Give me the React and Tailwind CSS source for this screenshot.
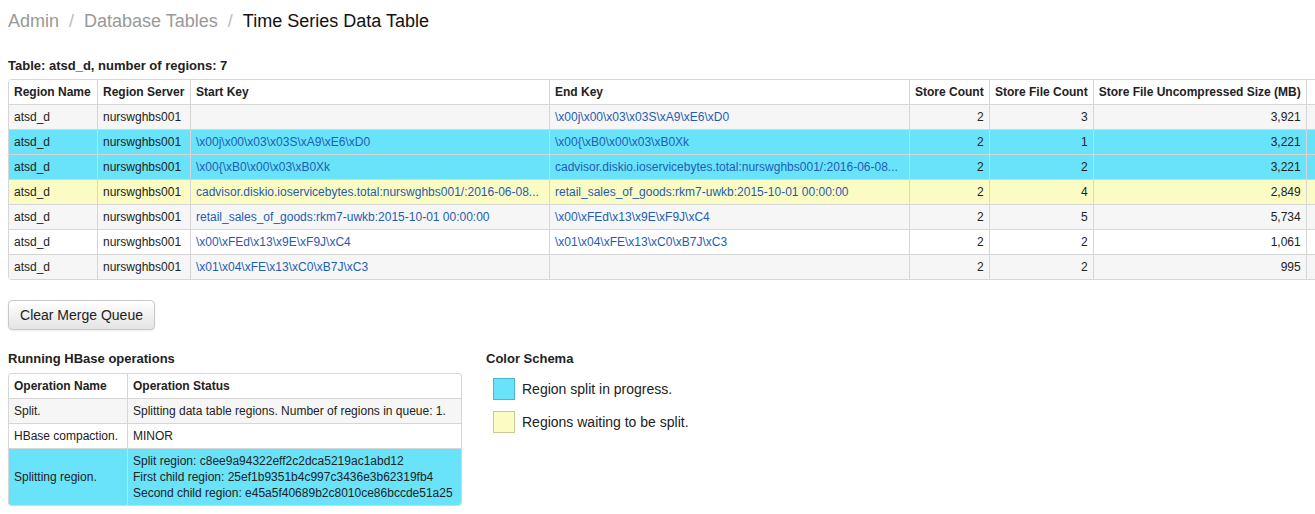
const columns = [
  ["Region Name", "w-[89px]", "left"],
  ["Region Server", "w-[93px]", "left"],
  ["Start Key", "w-[359px]", "left"],
  ["End Key", "w-[360px]", "left"],
  ["Store Count", "w-[79px]", "right"],
  ["Store File Count", "w-[104px]", "right"],
  ["Store File Uncompressed Size (MB)", "w-[211px]", "right"],
  ["Store File Size (MB)", "w-[140px]", "right"]
];

const regions = [
  ["", "\\x00j\\x00\\x03\\x03S\\xA9\\xE6\\xD0", 2, 3, "3,921", ""],
  ["\\x00j\\x00\\x03\\x03S\\xA9\\xE6\\xD0", "\\x00{\\xB0\\x00\\x03\\xB0Xk", 2, 1, "3,221", "split"],
  ["\\x00{\\xB0\\x00\\x03\\xB0Xk", "cadvisor.diskio.ioservicebytes.total:nurswghbs001/:2016-06-08...", 2, 2, "3,221", "split"],
  ["cadvisor.diskio.ioservicebytes.total:nurswghbs001/:2016-06-08...", "retail_sales_of_goods:rkm7-uwkb:2015-10-01 00:00:00", 2, 4, "2,849", "wait"],
  ["retail_sales_of_goods:rkm7-uwkb:2015-10-01 00:00:00", "\\x00\\xFEd\\x13\\x9E\\xF9J\\xC4", 2, 5, "5,734", ""],
  ["\\x00\\xFEd\\x13\\x9E\\xF9J\\xC4", "\\x01\\x04\\xFE\\x13\\xC0\\xB7J\\xC3", 2, 2, "1,061", ""],
  ["\\x01\\x04\\xFE\\x13\\xC0\\xB7J\\xC3", "", 2, 2, "995", ""]
];

function rowTone(state, index) {
  if (state === "split") return "bg-[#69e3fa]";
  if (state === "wait") return "bg-[#fafcc3]";
  return index % 2 === 0 ? "bg-[#f6f6f6]" : "bg-white";
}

const td = "border-l border-t border-[#d6d6d6] px-[5px] py-[4px] leading-4 whitespace-nowrap overflow-hidden";

function RegionTable() {
  return (
    <div className="w-[1451px] overflow-hidden rounded-[4px] border border-l-0 border-[#d6d6d6]">
      <table className="table-fixed border-separate border-spacing-0 text-[12px] text-[#222]">
        <colgroup>
          {columns.map(([title, width]) => <col key={title} className={width} />)}
        </colgroup>
        <thead>
          <tr className="bg-white">
            {columns.map(([title, , align]) => (
              <th key={title} className={`border-l border-[#d6d6d6] px-[5px] py-[4px] leading-4 font-bold whitespace-nowrap ${align === "right" ? "text-right" : "text-left"}`}>{title}</th>
            ))}
          </tr>
        </thead>
        <tbody>
          {regions.map(([start, end, stores, files, size, state], i) => (
            <tr key={i} className={rowTone(state, i)}>
              <td className={td}>atsd_d</td>
              <td className={td}>nurswghbs001</td>
              <td className={`${td} text-[#1f5db5]`}>{start}</td>
              <td className={`${td} text-[#1f5db5]`}>{end}</td>
              <td className={`${td} text-right`}>{stores}</td>
              <td className={`${td} text-right`}>{files}</td>
              <td className={`${td} text-right`}>{size}</td>
              <td className={td}></td>
            </tr>
          ))}
        </tbody>
      </table>
    </div>
  );
}

const operations = [
  ["Split.", ["Splitting data table regions. Number of regions in queue: 1."], "bg-[#f6f6f6]"],
  ["HBase compaction.", ["MINOR"], "bg-white"],
  ["Splitting region.", [
    "Split region: c8ee9a94322eff2c2dca5219ac1abd12",
    "First child region: 25ef1b9351b4c997c3436e3b62319fb4",
    "Second child region: e45a5f40689b2c8010ce86bccde51a25"
  ], "bg-[#69e3fa]"]
];

function OperationsTable() {
  return (
    <div className="w-[454px] overflow-hidden rounded-[4px] border border-l-0 border-[#d6d6d6]">
      <table className="w-full table-fixed border-separate border-spacing-0 text-[12px] text-[#222]">
        <colgroup>
          <col className="w-[119px]" />
          <col />
        </colgroup>
        <thead>
          <tr>
            <th className="border-l border-[#d6d6d6] px-[5px] py-[4px] text-left leading-4 font-bold">Operation Name</th>
            <th className="border-l border-[#d6d6d6] px-[5px] py-[4px] text-left leading-4 font-bold">Operation Status</th>
          </tr>
        </thead>
        <tbody>
          {operations.map(([name, lines, tone]) => (
            <tr key={name} className={tone}>
              <td className={td}>{name}</td>
              <td className={td}>{lines.map((line) => <div key={line}>{line}</div>)}</td>
            </tr>
          ))}
        </tbody>
      </table>
    </div>
  );
}

export default function App() {
  return (
    <div className="h-[514px] w-[1315px] overflow-hidden bg-white font-['Liberation_Sans',Arial,sans-serif] text-[#222]">
      <div className="px-2 pt-[11px]">
        <div className="flex items-center gap-[10px] text-[18px] leading-5">
          <span className="text-[#999]">Admin</span>
          <span className="text-[#bbb]">/</span>
          <span className="text-[#999]">Database Tables</span>
          <span className="text-[#bbb]">/</span>
          <span className="text-[#111]">Time Series Data Table</span>
        </div>

        <h3 className="mt-[27px] mb-[5px] text-[13px] font-bold leading-4">Table: atsd_d, number of regions: 7</h3>
        <RegionTable />

        <button className="mt-[20px] h-[30px] w-[147px] rounded-[4px] border border-[#c8c8c8] bg-gradient-to-b from-white to-[#e4e4e4] text-[14px] text-[#222] shadow-[0_1px_2px_rgba(0,0,0,0.08)]">Clear Merge Queue</button>

        <div className="mt-[21px] flex gap-[24px]">
          <div>
            <h3 className="mb-[6px] text-[13px] font-bold leading-4">Running HBase operations</h3>
            <OperationsTable />
          </div>
          <div>
            <h3 className="mb-[4px] text-[13px] font-bold leading-4">Color Schema</h3>
            <div className="flex flex-col gap-[11px] pl-[7px] pt-[7px]">
              <div className="flex items-center gap-[7px] text-[14px]">
                <span className="h-[22px] w-[22px] border border-[#4bb5cb] bg-[#69e3fa]" />
                <span>Region split in progress.</span>
              </div>
              <div className="flex items-center gap-[7px] text-[14px]">
                <span className="h-[22px] w-[22px] border border-[#c9c996] bg-[#fafcc3]" />
                <span>Regions waiting to be split.</span>
              </div>
            </div>
          </div>
        </div>
      </div>
    </div>
  );
}
